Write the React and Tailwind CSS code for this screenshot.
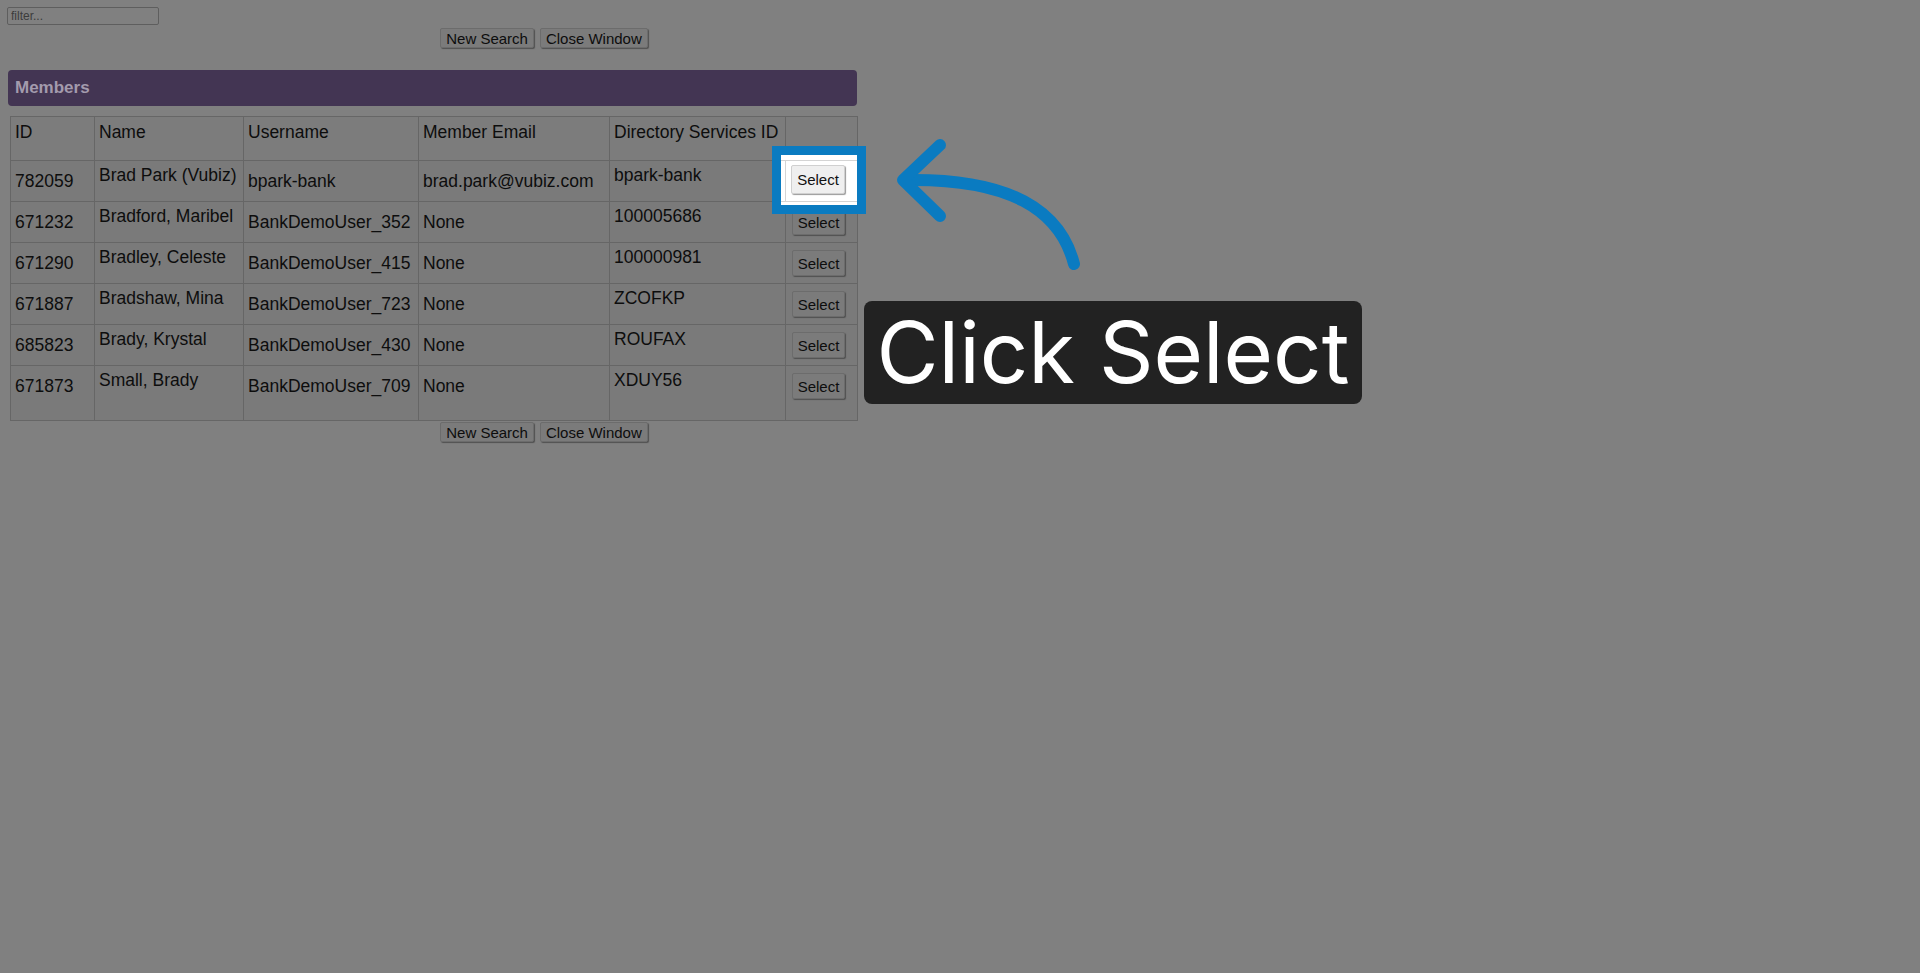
import React from "react";

const members = [
  { id: "782059", name: "Brad Park (Vubiz)", username: "bpark-bank", email: "brad.park@vubiz.com", dsid: "bpark-bank" },
  { id: "671232", name: "Bradford, Maribel", username: "BankDemoUser_352", email: "None", dsid: "100005686" },
  { id: "671290", name: "Bradley, Celeste", username: "BankDemoUser_415", email: "None", dsid: "100000981" },
  { id: "671887", name: "Bradshaw, Mina", username: "BankDemoUser_723", email: "None", dsid: "ZCOFKP" },
  { id: "685823", name: "Brady, Krystal", username: "BankDemoUser_430", email: "None", dsid: "ROUFAX" },
  { id: "671873", name: "Small, Brady", username: "BankDemoUser_709", email: "None", dsid: "XDUY56" },
];

function PageButton({ children }) {
  return (
    <button className="h-[20px] px-[5px] text-[15px] leading-none text-[#0d0d0d] bg-[#7b7b7b] border border-[#6c6c6c] rounded-[2px] shadow-[1px_1px_1px_#505050]">
      {children}
    </button>
  );
}

function ButtonRow() {
  return (
    <div className="w-[1088px] flex justify-center gap-[6px]">
      <PageButton>New Search</PageButton>
      <PageButton>Close Window</PageButton>
    </div>
  );
}

export default function App() {
  const cell = "border border-[#666] px-[4px]";

  return (
    <div className="relative min-h-[973px] bg-[#808080] font-['Liberation_Sans',Arial,sans-serif] text-[#0d0d0d]">
      <div className="px-[7px] pt-[7px]">
        {/* filter */}
        <input
          type="text"
          placeholder="filter..."
          className="block w-[152px] h-[18px] px-[3px] text-[12px] bg-[#808080] border border-[#5e5e5e] rounded-[2px] placeholder:text-[#3c3c3c] outline-none"
        />
        <div className="mt-[3px] -ml-[7px]">
          <ButtonRow />
        </div>

        {/* members header */}
        <div className="mt-[22px] ml-[1px] w-[849px] h-[36px] rounded-[4px] bg-[#433553] flex items-center pl-[7px]">
          <span className="text-[17px] font-bold text-[#a39bad]">Members</span>
        </div>

        {/* table */}
        <table className="mt-[10px] ml-[3px] w-[847px] table-fixed border-collapse border border-[#666] text-[17.5px] leading-[20px]">
          <colgroup>
            <col className="w-[84px]" />
            <col className="w-[149px]" />
            <col className="w-[175px]" />
            <col className="w-[191px]" />
            <col className="w-[176px]" />
            <col className="w-[72px]" />
          </colgroup>
          <thead>
            <tr className="h-[44px] bg-[#7c7c7c]">
              {["ID", "Name", "Username", "Member Email", "Directory Services ID", ""].map((h, i) => (
                <th key={i} className={`${cell} align-top pt-[5px] text-left font-normal whitespace-nowrap`}>
                  {h}
                </th>
              ))}
            </tr>
          </thead>
          <tbody>
            {members.map((m, i) => {
              const last = i === members.length - 1;
              const pad = last ? "pb-[14px]" : "";
              return (
                <tr key={m.id} className={`${last ? "h-[55px]" : "h-[41px]"} bg-[#7a7a7a]`}>
                  <td className={`${cell} ${pad} align-middle whitespace-nowrap`}>{m.id}</td>
                  <td className={`${cell} align-top pt-[4px] whitespace-nowrap`}>{m.name}</td>
                  <td className={`${cell} ${pad} align-middle whitespace-nowrap`}>{m.username}</td>
                  <td className={`${cell} ${pad} align-middle whitespace-nowrap`}>{m.email}</td>
                  <td className={`${cell} align-top pt-[4px] whitespace-nowrap`}>{m.dsid}</td>
                  <td className={`${cell} ${pad} align-middle`}>
                    <button className="ml-[2px] w-[53px] h-[26px] text-[15px] leading-none text-[#0d0d0d] bg-[#7b7b7b] border border-[#6c6c6c] rounded-[2px] shadow-[1px_1px_1px_#505050]">
                      Select
                    </button>
                  </td>
                </tr>
              );
            })}
          </tbody>
        </table>

        <div className="mt-[1px] -ml-[7px]">
          <ButtonRow />
        </div>
      </div>

      {/* highlight box */}
      <div className="absolute left-[772px] top-[146px] w-[94px] h-[68px] border-[9px] border-[#0a7bc1] bg-white">
        <div className="absolute left-[4px] top-[5px] w-px h-[41px] bg-[#d4d4d4]" />
        <div className="absolute left-0 top-[5px] w-full h-px bg-[#d4d4d4]" />
        <div className="absolute left-0 top-[46px] w-full h-px bg-[#d4d4d4]" />
        <button className="absolute left-[10px] top-[10px] w-[54px] h-[29px] text-[15px] leading-none text-[#111] bg-[#efefef] border border-[#d0d0d0] rounded-[2px] shadow-[1px_1px_1px_#9a9a9a]">
          Select
        </button>
      </div>

      {/* arrow */}
      <svg className="absolute left-0 top-0 pointer-events-none" width="1400" height="300" viewBox="0 0 1400 300">
        <path
          d="M1074 264 C1060 210 1010 178 905 180"
          fill="none"
          stroke="#0a7bc1"
          strokeWidth="12"
          strokeLinecap="round"
        />
        <polyline
          points="940,145 903,180 940,216"
          fill="none"
          stroke="#0a7bc1"
          strokeWidth="12"
          strokeLinecap="round"
          strokeLinejoin="round"
        />
      </svg>

      {/* tooltip */}
      <div className="absolute left-[864px] top-[301px] w-[498px] h-[103px] rounded-[8px] bg-[#222] flex items-center justify-center">
        <span className="font-['Inter',sans-serif] text-[85px] leading-none text-white">Click Select</span>
      </div>
    </div>
  );
}
